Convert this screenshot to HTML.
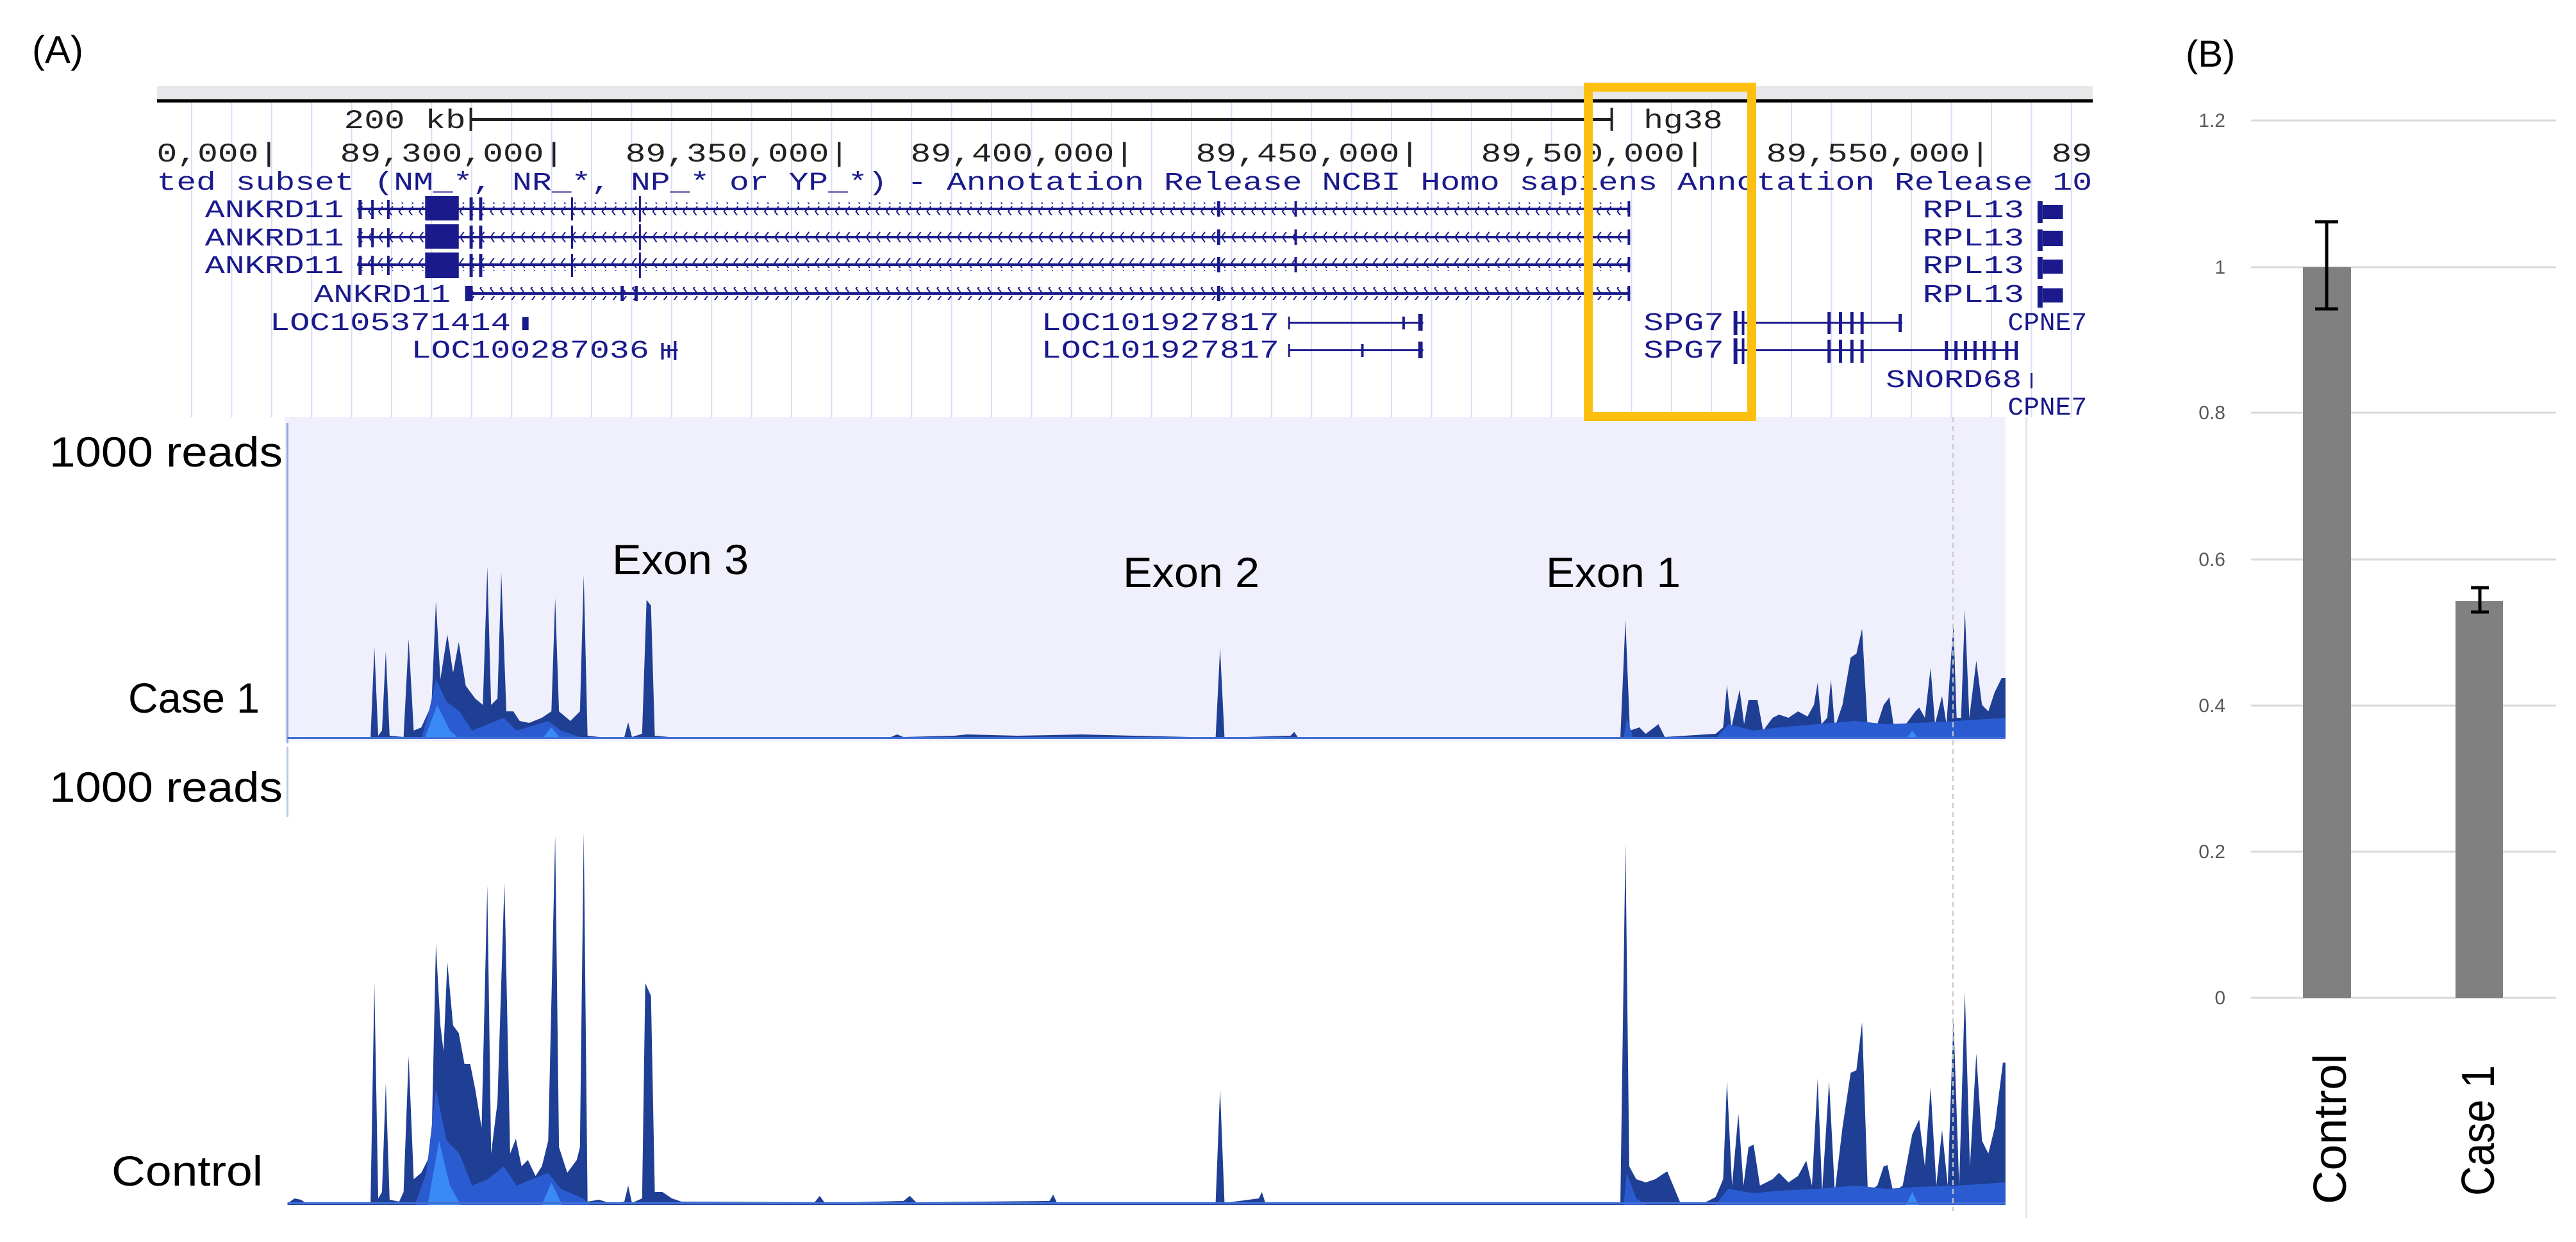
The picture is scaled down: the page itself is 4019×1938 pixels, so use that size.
<!DOCTYPE html>
<html><head><meta charset="utf-8"><style>
html,body{margin:0;padding:0;background:#fff;width:4019px;height:1938px;overflow:hidden}
svg{display:block}
</style></head><body>
<svg width="4019" height="1938" viewBox="0 0 4019 1938" xmlns="http://www.w3.org/2000/svg">
<defs>
<pattern id="grid" x="298" y="0" width="62.4" height="10" patternUnits="userSpaceOnUse">
<rect x="0" y="0" width="2" height="10" fill="#dcdcf6"/>
</pattern>
<pattern id="hatch" x="0" y="0" width="16" height="20" patternUnits="userSpaceOnUse">
<path d="M11,2 L5,10 L11,18" stroke="#1a1a8c" stroke-width="2" fill="none"/>
</pattern>
</defs>
<rect width="4019" height="1938" fill="#fff"/>
<text x="50" y="98" font-family="Liberation Sans, sans-serif" font-size="60" fill="#000">(A)</text>
<text x="3410" y="104" font-family="Liberation Sans, sans-serif" font-size="58" fill="#000">(B)</text>

<!-- gene track -->
<rect x="245" y="134" width="3020" height="22" fill="#e8e8ea"/>
<rect x="245" y="155" width="3020" height="5" fill="#000"/>
<rect x="245" y="160" width="3020" height="491" fill="url(#grid)"/>
<g transform="scale(0.99,1)">
<g font-family="Liberation Mono, monospace" font-size="42" fill="#222">
<text x="542" y="200" textLength="192" lengthAdjust="spacingAndGlyphs">200 kb</text>
<rect x="742" y="184" width="1800" height="5" fill="#222"/>
<rect x="740" y="168" width="4" height="36" fill="#222"/>
<rect x="2538" y="168" width="4" height="36" fill="#222"/>
<text x="2590" y="200" textLength="125" lengthAdjust="spacingAndGlyphs">hg38</text>
<text x="247" y="252" textLength="3050" lengthAdjust="spacingAndGlyphs" xml:space="preserve">0,000|   89,300,000|   89,350,000|   89,400,000|   89,450,000|   89,500,000|   89,550,000|   89</text>
</g>
<g font-family="Liberation Mono, monospace" font-size="40" fill="#1a1a8c">
<text x="247" y="296" textLength="3050" lengthAdjust="spacingAndGlyphs">ted subset (NM_*, NR_*, NP_* or YP_*) - Annotation Release NCBI Homo sapiens Annotation Release 10</text>
<text x="323" y="339" textLength="219" lengthAdjust="spacingAndGlyphs">ANKRD11</text>
<text x="323" y="383" textLength="219" lengthAdjust="spacingAndGlyphs">ANKRD11</text>
<text x="323" y="426" textLength="219" lengthAdjust="spacingAndGlyphs">ANKRD11</text>
<text x="495" y="471" textLength="215" lengthAdjust="spacingAndGlyphs">ANKRD11</text>
<text x="3030" y="339" textLength="160" lengthAdjust="spacingAndGlyphs">RPL13</text>
<text x="3030" y="383" textLength="160" lengthAdjust="spacingAndGlyphs">RPL13</text>
<text x="3030" y="426" textLength="160" lengthAdjust="spacingAndGlyphs">RPL13</text>
<text x="3030" y="471" textLength="160" lengthAdjust="spacingAndGlyphs">RPL13</text>
<text x="425" y="515" textLength="380" lengthAdjust="spacingAndGlyphs">LOC105371414</text>
<text x="648" y="558" textLength="375" lengthAdjust="spacingAndGlyphs">LOC100287036</text>
<text x="1641" y="515" textLength="375" lengthAdjust="spacingAndGlyphs">LOC101927817</text>
<text x="1641" y="558" textLength="375" lengthAdjust="spacingAndGlyphs">LOC101927817</text>
<text x="2590" y="515" textLength="127" lengthAdjust="spacingAndGlyphs">SPG7</text>
<text x="2590" y="558" textLength="127" lengthAdjust="spacingAndGlyphs">SPG7</text>
<text x="2972" y="604" textLength="214" lengthAdjust="spacingAndGlyphs">SNORD68</text>
<text x="3164" y="515" textLength="125" lengthAdjust="spacingAndGlyphs">CPNE7</text>
<text x="3164" y="647" textLength="125" lengthAdjust="spacingAndGlyphs">CPNE7</text>
</g>
<g fill="#1a1a8c">
<rect x="563" y="316" width="2006" height="20" fill="url(#hatch)"/>
<rect x="563" y="324" width="2006" height="4"/>
<rect x="563" y="360" width="2006" height="20" fill="url(#hatch)"/>
<rect x="563" y="368" width="2006" height="4"/>
<rect x="563" y="403" width="2006" height="20" fill="url(#hatch)"/>
<rect x="563" y="411" width="2006" height="4"/>
<rect x="733" y="448" width="1836" height="20" fill="url(#hatch)"/>
<rect x="733" y="456" width="1836" height="4"/>
<rect x="670" y="306" width="53" height="38"/>
<rect x="670" y="350" width="53" height="38"/>
<rect x="670" y="394" width="53" height="40"/>
<rect x="565" y="312" width="5" height="30"/><rect x="565" y="356" width="5" height="30"/><rect x="565" y="399" width="5" height="30"/>
<rect x="585" y="312" width="4" height="30"/><rect x="585" y="356" width="4" height="30"/><rect x="585" y="399" width="4" height="30"/>
<rect x="610" y="312" width="4" height="30"/><rect x="610" y="356" width="4" height="30"/><rect x="610" y="399" width="4" height="30"/>
<rect x="740" y="308" width="5" height="36"/><rect x="740" y="352" width="5" height="36"/><rect x="740" y="396" width="5" height="36"/>
<rect x="755" y="308" width="5" height="36"/><rect x="755" y="352" width="5" height="36"/><rect x="755" y="396" width="5" height="36"/>
<rect x="900" y="308" width="3" height="36"/><rect x="900" y="352" width="3" height="36"/><rect x="900" y="396" width="3" height="36"/>
<rect x="1007" y="306" width="3" height="40"/><rect x="1007" y="350" width="3" height="40"/><rect x="1007" y="394" width="3" height="40"/>
<rect x="1918" y="314" width="5" height="24"/><rect x="1918" y="358" width="5" height="24"/><rect x="1918" y="401" width="5" height="24"/><rect x="1918" y="446" width="5" height="24"/>
<rect x="2040" y="314" width="4" height="24"/><rect x="2040" y="358" width="4" height="24"/><rect x="2040" y="401" width="4" height="24"/>
<rect x="2565" y="314" width="4" height="24"/><rect x="2565" y="358" width="4" height="24"/><rect x="2565" y="401" width="4" height="24"/><rect x="2565" y="446" width="4" height="24"/>
<rect x="733" y="446" width="12" height="24"/>
<rect x="978" y="446" width="5" height="24"/><rect x="1000" y="446" width="5" height="24"/>
<rect x="3211" y="314" width="8" height="34"/><rect x="3219" y="320" width="32" height="22"/>
<rect x="3211" y="358" width="8" height="34"/><rect x="3219" y="360" width="32" height="24"/>
<rect x="3211" y="401" width="8" height="34"/><rect x="3219" y="405" width="32" height="22"/>
<rect x="3211" y="446" width="8" height="34"/><rect x="3219" y="450" width="32" height="22"/>
<rect x="823" y="495" width="10" height="20"/>
<rect x="1042" y="535" width="4" height="26"/><rect x="1052" y="538" width="4" height="20"/><rect x="1062" y="532" width="4" height="30"/><rect x="1042" y="545" width="26" height="3"/>
<rect x="2030" y="502" width="213" height="3"/><rect x="2030" y="494" width="3" height="20"/><rect x="2210" y="494" width="4" height="20"/><rect x="2235" y="490" width="7" height="26"/>
<rect x="2030" y="545" width="213" height="3"/><rect x="2030" y="537" width="3" height="20"/><rect x="2145" y="537" width="4" height="20"/><rect x="2235" y="533" width="7" height="26"/>
<rect x="2732" y="502" width="266" height="3"/><rect x="2732" y="485" width="6" height="38"/><rect x="2745" y="485" width="4" height="38"/>
<rect x="2880" y="487" width="5" height="34"/><rect x="2898" y="487" width="5" height="34"/><rect x="2916" y="487" width="5" height="34"/><rect x="2932" y="487" width="5" height="34"/><rect x="2992" y="490" width="5" height="28"/>
<rect x="2732" y="545" width="447" height="3"/><rect x="2732" y="528" width="6" height="40"/><rect x="2745" y="528" width="4" height="40"/>
<rect x="2880" y="530" width="5" height="36"/><rect x="2898" y="530" width="5" height="36"/><rect x="2916" y="530" width="5" height="36"/><rect x="2932" y="530" width="5" height="36"/>
<rect x="3065" y="532" width="5" height="30"/><rect x="3080" y="532" width="5" height="30"/><rect x="3095" y="532" width="5" height="30"/><rect x="3110" y="532" width="5" height="30"/><rect x="3125" y="532" width="5" height="30"/><rect x="3140" y="532" width="5" height="30"/><rect x="3160" y="532" width="5" height="30"/><rect x="3175" y="532" width="5" height="30"/>
<rect x="3200" y="582" width="3" height="24"/>
</g>
</g>

<!-- tracks -->
<g transform="translate(400,0) scale(0.9898,1) translate(-400,0)">
<rect x="445" y="651" width="2712" height="506" fill="#f0f0fc"/>
<path fill="#1f3f95" d="M449,1152 L580,1150 L586,1010 L592,1148 L598,1140 L604,1016 L610,1148 L632,1150 L640,997 L648,1140 L660,1135 L676,1100 L683,938 L690,1060 L701,990 L710,1050 L719,1002 L730,1070 L745,1090 L757,1100 L764,884 L770,1100 L780,1090 L786,894 L794,1110 L805,1110 L815,1125 L830,1128 L850,1120 L865,1110 L871,933 L877,1110 L895,1125 L910,1110 L916,897 L922,1148 L940,1150 L980,1150 L986,1127 L992,1150 L1008,1145 L1015,936 L1022,945 L1028,1148 L1050,1150 L1400,1150 L1410,1146 L1420,1150 L1500,1148 L1520,1146 L1600,1148 L1700,1146 L1912,1151 L1919,1011 L1926,1151 L2030,1148 L2036,1142 L2042,1151 L2550,1150 L2558,967 L2565,1140 L2580,1135 L2590,1145 L2610,1130 L2620,1150 L2700,1145 L2712,1135 L2718,1069 L2725,1135 L2738,1076 L2745,1130 L2752,1092 L2766,1092 L2775,1140 L2790,1120 L2800,1115 L2815,1120 L2830,1110 L2845,1118 L2855,1100 L2861,1065 L2867,1130 L2876,1120 L2882,1061 L2888,1135 L2900,1100 L2913,1026 L2922,1020 L2931,981 L2940,1140 L2955,1130 L2965,1100 L2974,1088 L2982,1140 L3000,1130 L3015,1110 L3021,1104 L3030,1120 L3039,1042 L3046,1130 L3057,1086 L3064,1130 L3075,974 L3080,1120 L3087,1120 L3093,951 L3100,1120 L3111,1031 L3120,1100 L3130,1110 L3140,1080 L3151,1058 L3157,1058 L3157,1153 L449,1153 Z"/>
<path fill="#2a5bd0" d="M660,1153 L672,1110 L683,1060 L700,1095 L720,1110 L740,1140 L765,1130 L790,1120 L810,1140 L860,1125 L880,1140 L910,1150 L920,1153 Z M2555,1153 L2560,1120 L2570,1150 L2580,1153 Z M2700,1153 L2720,1130 L2760,1140 L2800,1135 L2860,1130 L2920,1125 L2970,1130 L3020,1128 L3080,1125 L3157,1120 L3157,1153 Z"/>
<path fill="#3a8af5" d="M665,1153 L685,1100 L705,1140 L720,1153 Z M850,1153 L865,1135 L880,1153 Z M3000,1153 L3010,1140 L3020,1153 Z"/>
<rect x="449" y="1150" width="2708" height="3" fill="#3f6fd6"/>

<path fill="#1f3f95" d="M449,1878 L460,1870 L470,1872 L480,1878 L580,1876 L586,1534 L592,1870 L598,1860 L604,1690 L610,1872 L625,1875 L632,1860 L640,1648 L648,1840 L660,1830 L670,1810 L676,1790 L683,1473 L690,1600 L695,1640 L701,1501 L710,1600 L719,1612 L728,1660 L737,1660 L745,1700 L755,1760 L764,1382 L770,1800 L780,1720 L791,1377 L800,1800 L809,1777 L818,1820 L828,1810 L840,1835 L850,1820 L860,1780 L871,1304 L877,1790 L890,1830 L905,1810 L910,1790 L916,1298 L922,1875 L940,1872 L960,1878 L980,1875 L986,1850 L992,1877 L1008,1870 L1013,1534 L1022,1554 L1028,1860 L1040,1860 L1055,1870 L1070,1875 L1280,1876 L1288,1866 L1296,1877 L1420,1874 L1430,1866 L1440,1876 L1650,1874 L1656,1864 L1662,1877 L1912,1877 L1919,1699 L1926,1877 L1980,1870 L1985,1860 L1990,1876 L2550,1876 L2558,1315 L2564,1820 L2575,1840 L2590,1845 L2605,1840 L2620,1830 L2624,1828 L2645,1878 L2680,1878 L2700,1868 L2712,1840 L2718,1687 L2726,1850 L2736,1738 L2744,1850 L2752,1790 L2760,1786 L2770,1850 L2790,1840 L2800,1830 L2815,1845 L2830,1835 L2843,1811 L2852,1850 L2861,1683 L2868,1860 L2879,1687 L2888,1860 L2900,1760 L2913,1674 L2922,1670 L2931,1595 L2940,1860 L2955,1850 L2965,1820 L2971,1818 L2980,1860 L2995,1850 L3010,1770 L3021,1747 L3030,1820 L3039,1697 L3048,1850 L3057,1763 L3066,1850 L3075,1589 L3084,1850 L3093,1547 L3101,1820 L3111,1644 L3120,1780 L3130,1800 L3140,1760 L3153,1658 L3157,1658 L3157,1880 L449,1880 Z"/>
<path fill="#2a5bd0" d="M650,1880 L668,1830 L683,1700 L700,1780 L720,1800 L740,1850 L765,1840 L790,1820 L810,1850 L860,1830 L880,1855 L915,1870 L925,1880 Z M2555,1880 L2560,1830 L2575,1870 L2590,1880 Z M2700,1880 L2720,1855 L2760,1862 L2800,1858 L2860,1855 L2920,1850 L2970,1855 L3020,1852 L3080,1850 L3157,1845 L3157,1880 Z"/>
<path fill="#3a8af5" d="M670,1880 L688,1780 L705,1850 L722,1880 Z M850,1880 L865,1845 L882,1880 Z M3000,1880 L3010,1860 L3020,1880 Z"/>
<rect x="449" y="1876" width="2708" height="3" fill="#3f6fd6"/>
</g>
<rect x="447" y="660" width="3" height="500" fill="#4a74c9" opacity="0.6"/>
<rect x="447" y="1165" width="3" height="110" fill="#4a74c9" opacity="0.4"/>
<line x1="3047" y1="651" x2="3047" y2="1890" stroke="#c8c8c8" stroke-width="2" stroke-dasharray="8,6"/>
<rect x="3160" y="651" width="3" height="1250" fill="#e4e4e4"/>

<!-- orange box -->
<rect x="2478" y="136" width="255" height="514" fill="none" stroke="#fdc010" stroke-width="14"/>

<g font-family="Liberation Sans, sans-serif" font-size="66" fill="#000">
<text x="77" y="728" textLength="364" lengthAdjust="spacingAndGlyphs">1000 reads</text>
<text x="77" y="1251" textLength="364" lengthAdjust="spacingAndGlyphs">1000 reads</text>
<text x="200" y="1112" textLength="205" lengthAdjust="spacingAndGlyphs">Case 1</text>
<text x="174" y="1850" textLength="236" lengthAdjust="spacingAndGlyphs">Control</text>
<text x="955" y="896" textLength="213" lengthAdjust="spacingAndGlyphs">Exon 3</text>
<text x="1752" y="916" textLength="213" lengthAdjust="spacingAndGlyphs">Exon 2</text>
<text x="2412" y="916" textLength="210" lengthAdjust="spacingAndGlyphs">Exon 1</text>
</g>

<!-- chart B -->
<g stroke="#d9d9d9" stroke-width="3">
<line x1="3512" y1="188" x2="3988" y2="188"/>
<line x1="3512" y1="417" x2="3988" y2="417"/>
<line x1="3512" y1="644" x2="3988" y2="644"/>
<line x1="3512" y1="873" x2="3988" y2="873"/>
<line x1="3512" y1="1101" x2="3988" y2="1101"/>
<line x1="3512" y1="1329" x2="3988" y2="1329"/>
<line x1="3512" y1="1557" x2="3988" y2="1557"/>
</g>
<g font-family="Liberation Sans, sans-serif" font-size="30" fill="#595959" text-anchor="end">
<text x="3472" y="198">1.2</text>
<text x="3472" y="427">1</text>
<text x="3472" y="654">0.8</text>
<text x="3472" y="883">0.6</text>
<text x="3472" y="1111">0.4</text>
<text x="3472" y="1339">0.2</text>
<text x="3472" y="1567">0</text>
</g>
<rect x="3593" y="417" width="75" height="1140" fill="#808080"/>
<rect x="3831" y="938" width="74" height="619" fill="#808080"/>
<g stroke="#000" stroke-width="5">
<line x1="3630" y1="346" x2="3630" y2="482"/>
<line x1="3612" y1="346" x2="3648" y2="346"/>
<line x1="3612" y1="482" x2="3648" y2="482"/>
<line x1="3869" y1="917" x2="3869" y2="955"/>
<line x1="3855" y1="917" x2="3883" y2="917"/>
<line x1="3855" y1="955" x2="3883" y2="955"/>
</g>
<g font-family="Liberation Sans, sans-serif" font-size="72" fill="#000">
<text transform="translate(3660,1879) rotate(-90)" textLength="235" lengthAdjust="spacingAndGlyphs">Control</text>
<text transform="translate(3891,1866) rotate(-90)" textLength="204" lengthAdjust="spacingAndGlyphs">Case 1</text>
</g>
</svg>
</body></html>
